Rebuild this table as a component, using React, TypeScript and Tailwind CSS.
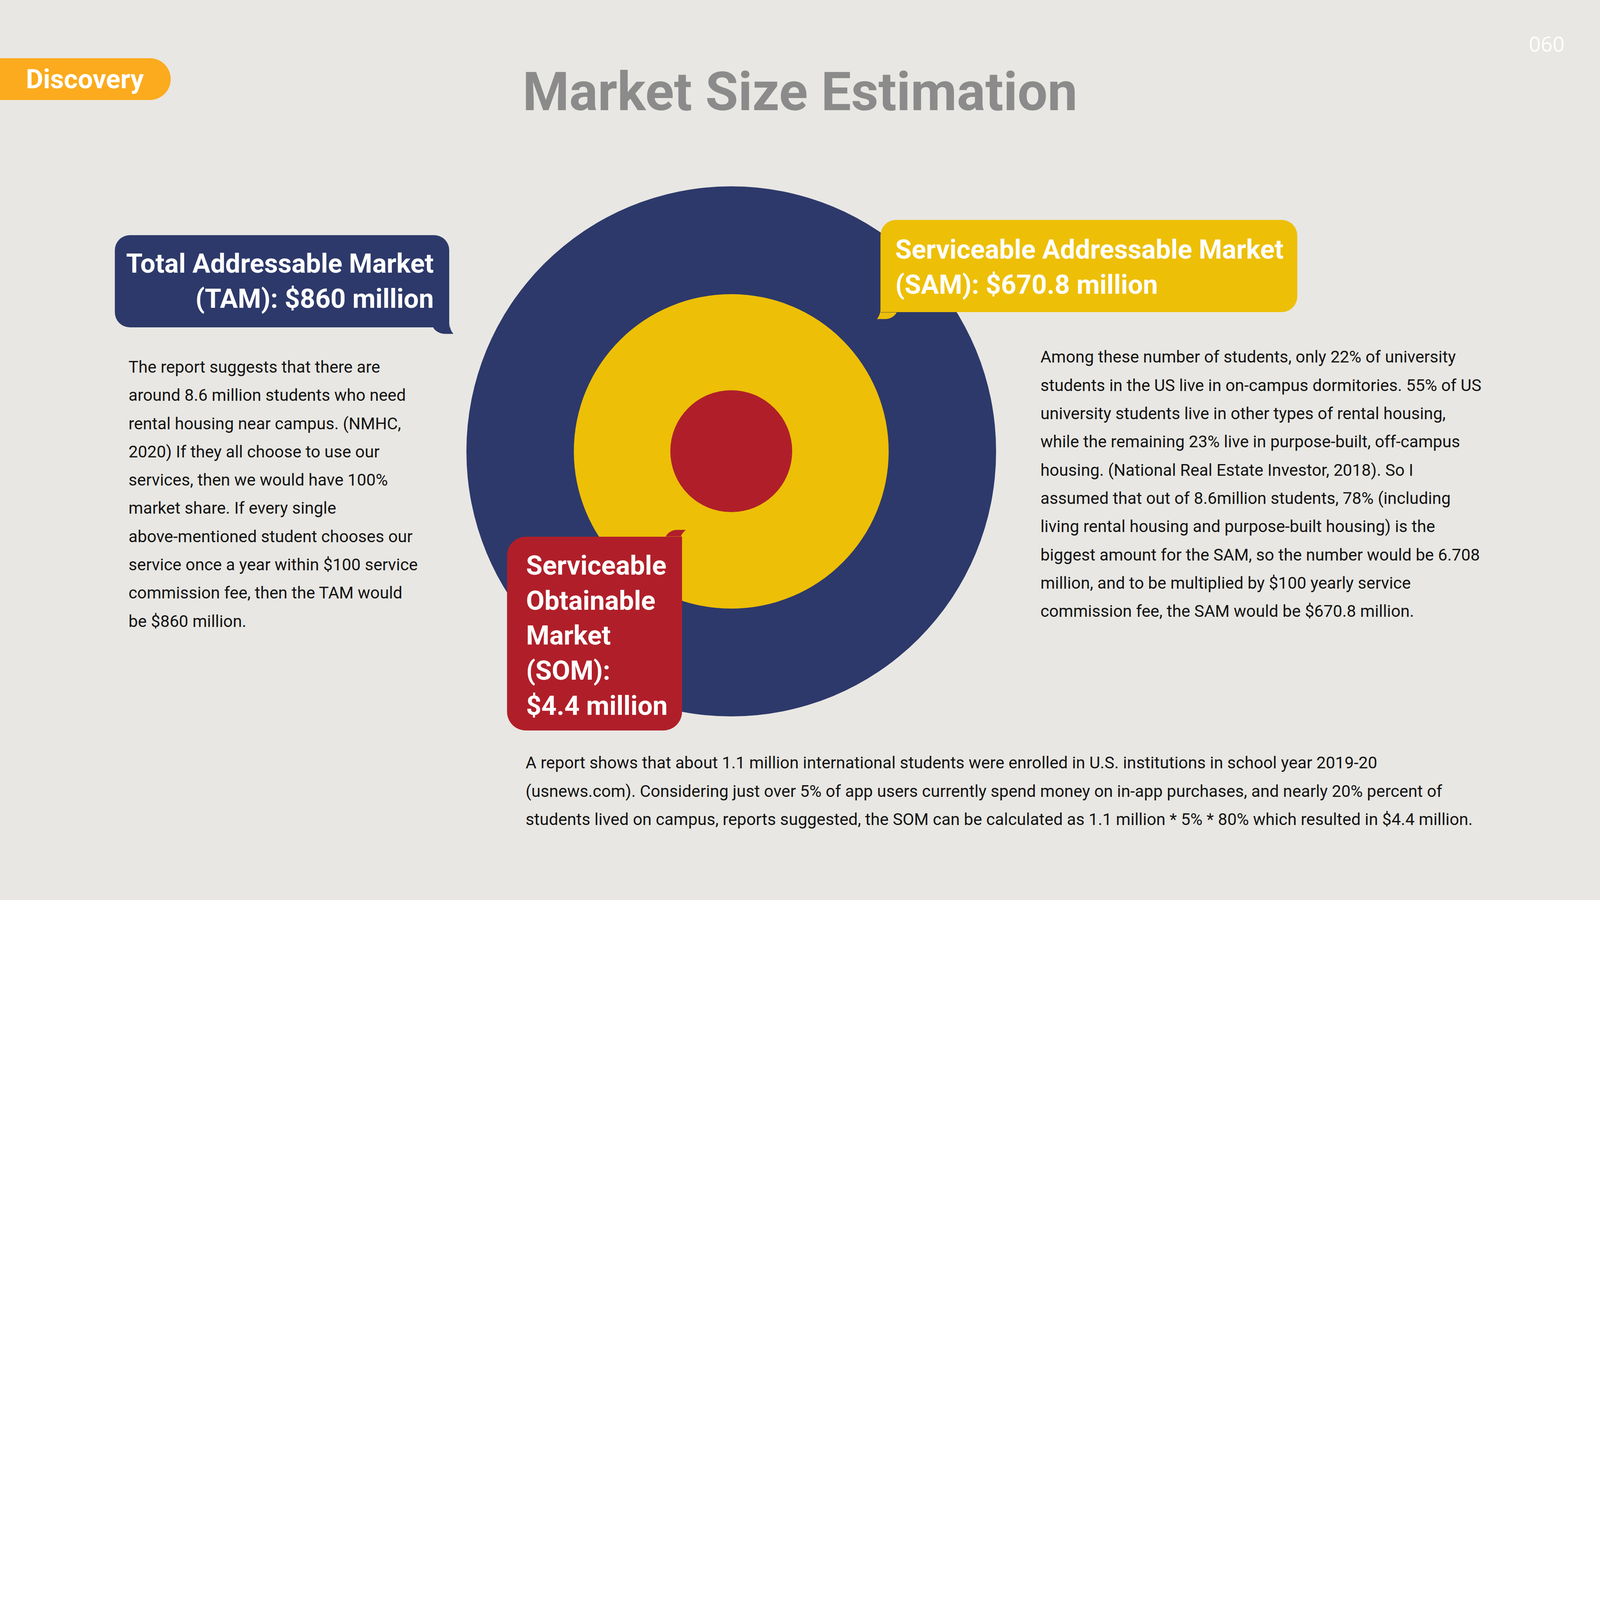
import { useEffect, useState, type ReactNode } from "react";

const tamText = [
    "The report suggests that there are",
    "around 8.6 million students who need",
    "rental housing near campus. (NMHC,",
    "2020) If they all choose to use our",
    "services, then we would have 100%",
    "market share. If every single",
    "above-mentioned student chooses our",
    "service once a year within $100 service",
    "commission fee, then the TAM would",
    "be $860 million.",
];

const samText = [
    "Among these number of students, only 22% of university",
    "students in the US live in on-campus dormitories. 55% of US",
    "university students live in other types of rental housing,",
    "while the remaining 23% live in purpose-built, off-campus",
    "housing. (National Real Estate Investor, 2018). So I",
    "assumed that out of 8.6million students, 78% (including",
    "living rental housing and purpose-built housing) is the",
    "biggest amount for the SAM, so the number would be 6.708",
    "million, and to be multiplied by $100 yearly service",
    "commission fee, the SAM would be $670.8 million.",
];

const somText = [
    "A report shows that about 1.1 million international students were enrolled in U.S. institutions in school year 2019-20",
    "(usnews.com). Considering just over 5% of app users currently spend money on in-app purchases, and nearly 20% percent of",
    "students lived on campus, reports suggested, the SOM can be calculated as 1.1 million * 5% * 80% which resulted in $4.4 million.",
];

const Paragraph = ({ lines, className }: { lines: string[]; className: string }) => (
    <p className={`whitespace-nowrap text-[80px] leading-[135.6px] text-[#141414] ${className}`}>
        {lines.map((line) => (
            <span key={line} className="block">
                {line}
            </span>
        ))}
    </p>
);

const Bubble = ({ className, children }: { className: string; children: ReactNode }) => (
    <div className={`font-bold text-white text-[128px] leading-[168px] whitespace-nowrap ${className}`}>{children}</div>
);

// the slide is laid out at 7680 x 4320 and fitted to the window width
const useFit = () => {
    const [scale, setScale] = useState(() => window.innerWidth / 7680);
    useEffect(() => {
        const onResize = () => setScale(window.innerWidth / 7680);
        window.addEventListener("resize", onResize);
        return () => window.removeEventListener("resize", onResize);
    }, []);
    return scale;
};

const App = () => {
    const scale = useFit();

    return (
        <div
            className="w-[7680px] h-[4320px] overflow-hidden bg-[#e8e7e3] font-['Roboto',sans-serif]"
            style={{ zoom: scale }}
        >
            {/* Header */}
            <header className="grid grid-cols-[1fr_auto_1fr] items-start h-[894px]">
                <div className="mt-[280px] h-[200px] w-[819px] rounded-r-full bg-[#fbab1d] flex items-center pl-[124px]">
                    <span className="text-[128px] leading-none font-bold text-white">Discovery</span>
                </div>
                <h1 className="mt-[314px] text-[256px] leading-none font-bold text-[#8b8b8b] whitespace-nowrap">
                    Market Size Estimation
                </h1>
                <span className="justify-self-end mt-[159px] mr-[170px] text-[100px] leading-none text-white font-['Open_Sans',sans-serif]">
                    060
                </span>
            </header>

            {/* Diagram row */}
            <section className="flex items-start">
                <div className="ml-[552px] w-[1605px] mt-[234px] shrink-0">
                    <Bubble className="relative h-[443px] rounded-[72px] rounded-br-none bg-[#2d396a] pt-[56px] pr-[75px] text-right">
                        Total Addressable Market
                        <br />
                        (TAM): $860 million
                        <svg className="absolute right-[-20px] bottom-[-33px]" width="100" height="100" viewBox="-80 -67 100 100">
                            <path d="M-79 0 C-68 20 -45 32 -18 32 L19 32 C2 12 -1 -10 0 -40 L0 0 Z" fill="#2d396a" />
                        </svg>
                    </Bubble>
                    <Paragraph lines={tamText} className="mt-[122px] ml-[65px]" />
                </div>

                <div className="relative ml-[81px] w-[2544px] h-[2544px] shrink-0 rounded-full bg-[#2d396a] flex items-center justify-center">
                    <div className="w-[1510px] h-[1510px] rounded-full bg-[#edbf07] flex items-center justify-center">
                        <div className="w-[586px] h-[586px] rounded-full bg-[#b01f29]" />
                    </div>

                    <Bubble className="absolute left-[1989px] top-[162px] w-[2000px] h-[443px] rounded-[75px] rounded-bl-none bg-[#edbf07] pt-[60px] pl-[70px]">
                        Serviceable Addressable Market
                        <br />
                        (SAM): $670.8 million
                        <svg className="absolute left-[-18px] bottom-[-33px]" width="100" height="100" viewBox="-18 -67 100 100">
                            <path d="M77 0 C66 20 45 32 20 32 L-18 32 C-2 12 1 -10 0 -40 L0 0 Z" fill="#edbf07" />
                        </svg>
                    </Bubble>

                    <Bubble className="absolute left-[195px] top-[1682px] w-[840px] h-[930px] rounded-[90px] rounded-tr-none bg-[#b01f29] pt-[57px] pl-[92px]">
                        Serviceable
                        <br />
                        Obtainable
                        <br />
                        Market
                        <br />
                        (SOM):
                        <br />
                        $4.4 million
                        <svg className="absolute right-[-20px] top-[-33px]" width="100" height="100" viewBox="-80 -33 100 100">
                            <path d="M-78 0 C-65 -22 -45 -32 -23 -32 L19 -32 C0 -15 -7 -5 -7 20 L0 60 L0 0 Z" fill="#b01f29" />
                        </svg>
                    </Bubble>
                </div>

                <Paragraph lines={samText} className="ml-[212px] mt-[751px]" />
            </section>

            <Paragraph lines={somText} className="mt-[155px] ml-[2523px]" />
        </div>
    );
};

export default App;
